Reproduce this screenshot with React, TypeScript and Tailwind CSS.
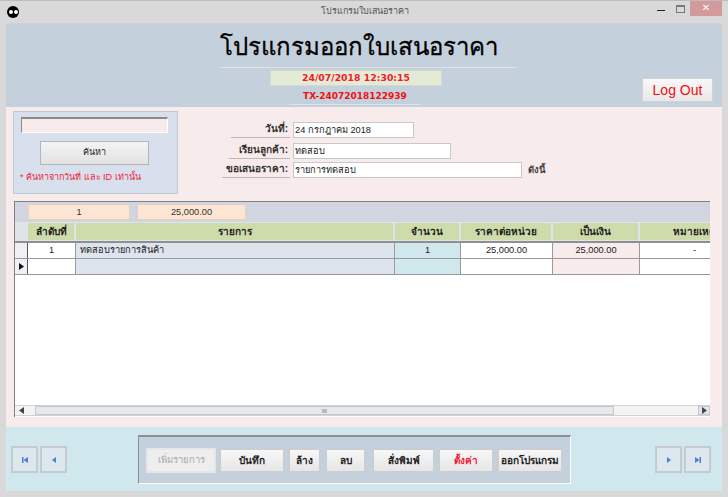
const font = "font-['Liberation_Sans','Noto_Sans','DejaVu_Sans',sans-serif]";

function NavButton({ kind }: { kind: "first" | "prev" | "next" | "last" }) {
  return (
    <button className="w-[27px] h-[27px] flex items-center justify-center bg-[#dde7ee] border-2 border-[#c2cbd0]">
      <svg width="8" height="8" viewBox="0 0 8 8" fill="#4f7fd9">
        {kind === "first" && <path d="M1 1h1.500v6H1zM7 1v6L2.500 4z" />}
        {kind === "prev" && <path d="M6 1v6L2 4z" />}
        {kind === "next" && <path d="M2 1v6l4-3z" />}
        {kind === "last" && <path d="M5.500 1H7v6H5.500zM1 1v6l4.500-3z" />}
      </svg>
    </button>
  );
}

function ActionButton({ label, width, tone }: { label: string; width: string; tone?: string }) {
  return (
    <button
      className={`${width} h-[25px] shrink-0 border-2 border-[#c9ced3] text-[10px] ${tone ?? "bg-gradient-to-b from-[#f7f7f7] to-[#e6e6e6] font-bold text-[#222]"}`}
    >
      {label}
    </button>
  );
}

function FieldRow({ label, value, width, labelWidth, suffix }: { label: string; value: string; width: string; labelWidth: string; suffix?: string }) {
  return (
    <div className="flex items-start">
      <div className="w-[68px] flex justify-end">
        <div className={`${labelWidth} h-[16px] border-b border-[#b8b8b8] text-right text-[10px] font-bold text-[#333] pr-0.5 leading-[14px] whitespace-nowrap`}>
          {label}
        </div>
      </div>
      <div className={`${width} h-[16px] ml-[3px] border border-[#c8c8c8] bg-white text-[9.25px] text-[#222] pl-px leading-[14px]`}>
        {value}
      </div>
      {suffix && <span className="ml-1.5 text-[9.5px] font-bold text-[#444] leading-[16px]">{suffix}</span>}
    </div>
  );
}

const columns = [
  { name: "ลำดับที่", w: "w-[48px]", cell: "bg-white", align: "text-center", value: "1" },
  { name: "รายการ", w: "w-[319px]", cell: "bg-[#dde4ed]", align: "text-left pl-1", value: "ทดสอบรายการสินค้า" },
  { name: "จำนวน", w: "w-[66px]", cell: "bg-[#d0e7ee]", align: "text-center", value: "1" },
  { name: "ราคาต่อหน่วย", w: "w-[92px]", cell: "bg-white", align: "text-center", value: "25,000.00" },
  { name: "เป็นเงิน", w: "w-[87px]", cell: "bg-[#f8ebeb]", align: "text-center", value: "25,000.00" },
  { name: "หมายเหตุ", w: "w-[110px]", cell: "bg-white", align: "text-center", value: "-" },
];

export default function App() {
  return (
    <div className={`${font} w-[728px] h-[497px] overflow-hidden bg-[#d9d9d9] flex flex-col`}>
      {/* title bar */}
      <div className="h-[23px] shrink-0 flex items-center border-t border-[#bcbcbc]">
        <div className="ml-[7px] w-[12px] h-[12px] rounded-full bg-black flex items-center justify-center gap-px">
          <span className="w-1 h-1 rounded-full bg-white" />
          <span className="w-1 h-1 rounded-full bg-white" />
        </div>
        <div className="flex-1 text-center text-[9px] text-[#555] pl-[53px]">โปรแกรมใบเสนอราคา</div>
        <div className="flex items-start self-start h-[15px] mr-[6px]">
          <div className="w-[8px] mt-[9px] h-[1px] bg-[#222] mr-[11px]" />
          <div className="w-[9px] h-[8px] mt-[4px] border border-[#777] border-t-2 mr-[5px]" />
          <div className="w-[32px] h-[15px] bg-[#d39a9c] text-white text-[10px] leading-[14px] text-center">✕</div>
        </div>
      </div>

      <div className="mx-[6px] w-[716px] h-[468px] flex flex-col border-t border-[#cfd3d8]">
        {/* header */}
        <div className="h-[83px] shrink-0 bg-[#c5d0dd] flex">
          <div className="ml-[214px] w-[297px] flex flex-col items-center">
            <div className="w-full h-[44px] border-b border-[#dfe3e8] pr-[20px] text-center text-[24px] leading-[46px] text-black whitespace-nowrap [-webkit-text-stroke:0.3px_black]">
              โปรแกรมออกใบเสนอราคา
            </div>
            <div className="mt-[2px] -ml-[25px] w-[172px] h-[16px] bg-[#e3ebd5] border border-[#d5d9d2] text-center font-['DejaVu_Sans',sans-serif] text-[9.3px] font-bold text-[#f01c2c] leading-[14px] whitespace-nowrap">
              24/07/2018 12:30:15
            </div>
            <div className="mt-[2px] -ml-[27px] w-[132px] h-[17px] border-b border-[#dfe3e8] text-center font-['DejaVu_Sans',sans-serif] text-[9px] font-bold text-[#f01010] leading-[16px] whitespace-nowrap">
              TX-24072018122939
            </div>
          </div>
          <button className="ml-[125px] mt-[54px] w-[71px] h-[24px] border border-[#cfd3d6] bg-gradient-to-b from-[#f8f8f8] to-[#e8e8e8] text-[14px] text-[#f01010]">
            Log Out
          </button>
        </div>

        {/* form + grid */}
        <div className="h-[320px] shrink-0 bg-[#f8ebeb] pt-[4px]">
          <div className="flex h-[84px]">
            <div className="ml-[7px] w-[165px] h-[83px] bg-[#d7e0ec] border border-[#c0c8d0] flex flex-col">
              <div className="ml-[7px] mt-[5px] w-[147px] h-[16px] bg-[#f8ebeb] border-t-2 border-l border-[#8a8a8a] border-b border-b-white border-r border-r-white" />
              <button className="ml-[26px] mt-[8px] w-[109px] h-[24px] border border-[#b6b6b6] bg-gradient-to-b from-[#f4f4f4] to-[#e2e2e2] text-[9px] text-[#222]">
                ค้นหา
              </button>
              <div className="ml-[6px] mt-[6px] text-[9px] leading-[13px] text-[#f01c3c] whitespace-nowrap">
                * ค้นหาจากวันที่ และ ID เท่านั้น
              </div>
            </div>
            <div className="ml-[44px] pt-[11px] flex flex-col">
              <FieldRow label="วันที่:" value="24 กรกฎาคม 2018" labelWidth="w-[59px]" width="w-[121px]" />
              <div className="mt-[5px]">
                <FieldRow label="เรียนลูกค้า:" value="ทดสอบ" labelWidth="w-[61px]" width="w-[158px]" />
              </div>
              <div className="mt-[3px]">
                <FieldRow label="ขอเสนอราคา:" value="รายการทดสอบ" labelWidth="w-[68px]" width="w-[229px]" suffix="ดังนี้" />
              </div>
            </div>
          </div>

          {/* table */}
          <div className="mt-[6px] ml-[8px] w-[696px] h-[216px] bg-white border-l border-t border-[#808080] flex flex-col overflow-hidden">
            <div className="h-[20px] shrink-0 bg-[#d0d5e0] pl-[13px] pt-[2px] flex gap-[7px]">
              <div className="w-[102px] h-[16px] bg-[#fde5d4] border border-[#e4d0c4] text-center text-[9.25px] text-[#333] leading-[14px]">1</div>
              <div className="w-[109px] h-[16px] bg-[#fde5d4] border border-[#e4d0c4] text-center text-[9.25px] text-[#333] leading-[14px]">25,000.00</div>
            </div>
            <div className="h-[21px] shrink-0 bg-[#dfe3ea] border-b-2 border-[#8f8f8f] flex pl-[13px]">
              {columns.map((c) => (
                <div key={c.name} className={`${c.w} shrink-0 border-r-2 border-[#dfe3ea] bg-[#cedcab] mt-px h-[17px] text-center text-[10px] font-bold text-[#222] leading-[17px] whitespace-nowrap overflow-hidden`}>
                  {c.name}
                </div>
              ))}
            </div>
            {[0, 1].map((row) => (
              <div key={row} className="h-[16px] shrink-0 flex border-b border-[#999]">
                <div className="w-[13px] shrink-0 bg-[#eef0f3] border-r border-[#555] flex items-center justify-center">
                  {row === 1 && <svg width="5" height="7" viewBox="0 0 5 7"><path d="M0 0l5 3.500L0 7z" fill="#111" /></svg>}
                </div>
                {columns.map((c) => (
                  <div key={c.name} className={`${c.w} shrink-0 ${c.cell} ${c.align} border-r border-[#999] text-[9.25px] leading-[15px] text-[#222] overflow-hidden`}>
                    {row === 0 ? c.value : ""}
                  </div>
                ))}
              </div>
            ))}
            <div className="flex-1" />
            <div className="h-[11px] shrink-0 flex items-stretch border-y border-[#cfd3d8] bg-[#f4f4f4] mb-[1px]">
              <div className="w-[13px] flex items-center justify-center"><svg width="5" height="7" viewBox="0 0 5 7"><path d="M5 0L0 3.500 5 7z" fill="#444" /></svg></div>
              <div className="w-[7px]" />
              <div className="w-[579px] bg-[#e6e8ea] border border-[#c5c9cc] flex items-center justify-center">
                <span className="w-[5px] h-[4px] bg-[#bbb]" />
              </div>
              <div className="flex-1" />
              <div className="w-[12px] bg-[#e2e6ec] border border-[#c5c9cc] flex items-center justify-center"><svg width="5" height="7" viewBox="0 0 5 7"><path d="M0 0l5 3.500L0 7z" fill="#445" /></svg></div>
            </div>
          </div>
        </div>

        {/* bottom bar */}
        <div className="flex-1 bg-[#d0e7ee] flex">
          <div className="ml-[5px] mt-[19px] flex gap-[2px]">
            <NavButton kind="first" />
            <NavButton kind="prev" />
          </div>
          <div className="ml-[71px] mt-[8px] w-[433px] h-[49px] bg-[#c5d0dd] border-l border-t-2 border-[#8b8f94] border-r-white border-r border-b border-b-white flex items-center pl-[7px] gap-[3px]">
            <ActionButton label="เพิ่มรายการ" width="w-[70px]" tone="bg-[#eeeeee] text-[#a8a8a8] !text-[9.5px] !border-[#e4e6e8]" />
            <ActionButton label="บันทึก" width="w-[66px]" />
            <ActionButton label="ล้าง" width="w-[33px]" />
            <div className="ml-px">
              <ActionButton label="ลบ" width="w-[41px]" />
            </div>
            <div className="ml-[3px]">
              <ActionButton label="สั่งพิมพ์" width="w-[63px]" />
            </div>
            <ActionButton label="ตั้งค่า" width="w-[56px]" tone="bg-gradient-to-b from-[#f7f7f7] to-[#e6e6e6] font-bold text-[#f01c3c]" />
            <ActionButton label="ออกโปรแกรม" width="w-[66px]" />
          </div>
          <div className="ml-[84px] mt-[19px] flex gap-[2px]">
            <NavButton kind="next" />
            <NavButton kind="last" />
          </div>
        </div>
      </div>
    </div>
  );
}
